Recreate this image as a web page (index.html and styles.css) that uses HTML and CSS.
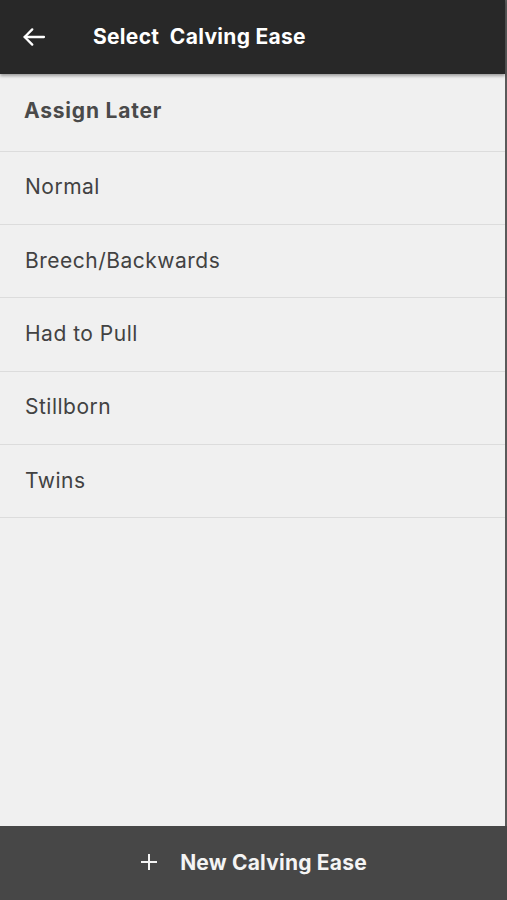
FILE: index.html
```html
<!DOCTYPE html>
<html lang="en">
<head>
  <meta charset="UTF-8" />
  <meta name="viewport" content="width=device-width, initial-scale=1" />
  <title>Select Calving Ease</title>
  <link rel="stylesheet" href="styles.css">
</head>
<body>
  <div class="screen">
    <header class="top-bar">
      <button class="back-btn" aria-label="Back">
        <svg width="28" height="28" viewBox="0 0 24 24" fill="none" stroke="#fff" stroke-width="2" stroke-linecap="round" stroke-linejoin="round">
          <path d="M20.5 12H4" />
          <path d="M10.5 5.5L4 12L10.5 18.5" />
        </svg>
      </button>
      <h1 class="title">Select&nbsp; Calving Ease</h1>
    </header>

    <ul class="option-list">
      <li class="option option-later">Assign Later</li>
      <li class="option">Normal</li>
      <li class="option">Breech/Backwards</li>
      <li class="option">Had to Pull</li>
      <li class="option">Stillborn</li>
      <li class="option">Twins</li>
    </ul>

    <button class="new-btn">
      <svg class="plus" width="18" height="18" viewBox="0 0 18 18" fill="none" stroke="#f4f4f4" stroke-width="2">
        <path d="M9 1V17" />
        <path d="M1 9H17" />
      </svg>
      New Calving Ease
    </button>
  </div>
</body>
</html>
```

FILE: styles.css
```css
* {
  box-sizing: border-box;
}

body {
  margin: 0;
  font-family: Inter, Roboto, sans-serif;
  background: #f0f0f0;
}

.screen {
  height: 900px;
  display: flex;
  flex-direction: column;
  border-right: 2px solid #5a5a5a;
}

.top-bar {
  height: 74px;
  flex-shrink: 0;
  background: #282828;
  display: flex;
  align-items: center;
  padding-left: 20px;
  padding-bottom: 1px;
  box-shadow: 0 2px 3px rgba(0, 0, 0, 0.35);
  position: relative;
  z-index: 1;
}

.back-btn {
  background: none;
  border: none;
  padding: 0;
  width: 28px;
  height: 28px;
  display: flex;
  cursor: pointer;
}

.title {
  margin: 0 0 0 45px;
  color: #fff;
  font-size: 21px;
  font-weight: 700;
  letter-spacing: 0.3px;
}

.option-list {
  list-style: none;
  margin: 0;
  padding: 0;
  flex: 1;
}

.option {
  height: 73.4px;
  display: flex;
  align-items: center;
  padding-left: 25px;
  padding-bottom: 2px;
  font-size: 21px;
  letter-spacing: 0.5px;
  color: #424242;
  border-bottom: 1px solid #dcdcdc;
}

.option-later {
  height: 77.5px;
  padding-left: 24px;
  padding-bottom: 4px;
  font-weight: 700;
  letter-spacing: 0.8px;
  color: #4a4a4a;
}

.new-btn {
  height: 74px;
  flex-shrink: 0;
  border: none;
  background: #474747;
  color: #f4f4f4;
  font-family: inherit;
  font-size: 21px;
  font-weight: 700;
  letter-spacing: 0.2px;
  display: flex;
  align-items: center;
  justify-content: center;
  gap: 22px;
  padding-bottom: 3px;
  cursor: pointer;
  margin-right: -2px;
}

.plus {
  flex-shrink: 0;
}
```
